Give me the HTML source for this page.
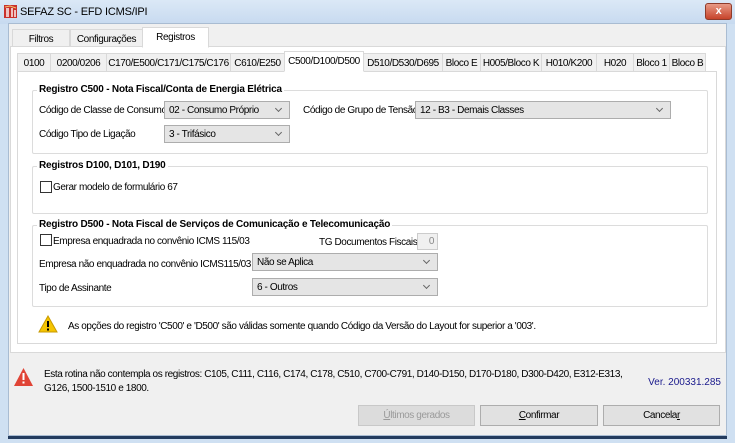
<!DOCTYPE html>
<html><head><meta charset="utf-8"><style>
*{box-sizing:border-box;margin:0;padding:0}
body{width:735px;height:443px;overflow:hidden;background:#cfe0f2;font-family:"Liberation Sans",sans-serif;font-size:10px;letter-spacing:-0.4px;color:#000;position:relative}
.a{position:absolute;white-space:nowrap}
#title{left:0;top:0;width:735px;height:24px;background:linear-gradient(#dbe8f6,#c7daf0)}
#client{left:8px;top:23px;width:719px;height:413px;background:#f0f0f0;border:1px solid #a9bcd2}
.tab{position:absolute;height:18px;border:1px solid #d9d9d9;border-bottom:none;background:#f0f0f0;text-align:center;line-height:19px}
.tab.sel{background:#fff;border-color:#d9d9d9}
.pane{position:absolute;background:#fff;border:1px solid #d9d9d9}
.grp{position:absolute;border:1px solid #dcdcdc;border-radius:2px}
.gt{position:absolute;background:#fff;font-weight:bold;padding:0 2px;top:-8px;left:4px;line-height:14px;letter-spacing:-0.2px}
.cb{position:absolute;height:18px;background:#e5e5e5;border:1px solid #adadad;padding-left:4px;line-height:17px}
.cb:after{content:"";position:absolute;right:8px;top:4px;width:4px;height:4px;border-right:1px solid #666;border-bottom:1px solid #666;transform:rotate(45deg)}
.chk{position:absolute;width:12px;height:12px;border:1px solid #333;background:#fff}
.btn{position:absolute;height:21px;border:1px solid #adadad;background:#e1e1e1;text-align:center;line-height:20px}
</style></head><body>
<div class="a" id="title"></div>
<svg class="a" style="left:4px;top:5px" width="13" height="13" viewBox="0 0 13 13"><rect x="0" y="0" width="13" height="13" fill="#c9302c"/><path d="M2 3h3v9H2zM7 3h2v9H7zM10 5h2v7h-2z" fill="#fff" opacity=".7"/><path d="M1 2l5-1 6 2" stroke="#f5c26b" fill="none"/></svg>
<div class="a" style="left:20px;top:6px;font-size:11px;letter-spacing:-0.2px">SEFAZ SC - EFD ICMS/IPI</div>
<div class="a" style="left:705px;top:3px;width:27px;height:17px;background:linear-gradient(#e89a86,#c7432a);border:1px solid #8e3b2b;border-radius:3px;color:#fff;text-align:center;font-weight:bold;line-height:15px;font-size:11px">x</div>
<div class="a" id="client"></div>
<div class="a" style="left:8px;top:436px;width:719px;height:3px;background:#233b5e"></div>

<div class="tab" style="left:12px;top:29px;width:58px">Filtros</div>
<div class="tab" style="left:70px;top:29px;width:73px">Configurações</div>
<div class="pane" style="left:10px;top:46px;width:716px;height:307px"></div>
<div class="tab sel" style="left:142px;top:27px;width:67px;height:21px;border-bottom:1px solid #fff">Registros</div>

<div class="tab" style="left:17px;top:53px;width:34px">0100</div>
<div class="tab" style="left:50px;top:53px;width:57px">0200/0206</div>
<div class="tab" style="left:106px;top:53px;width:125px">C170/E500/C171/C175/C176</div>
<div class="tab" style="left:230px;top:53px;width:55px">C610/E250</div>
<div class="tab" style="left:363px;top:53px;width:80px">D510/D530/D695</div>
<div class="tab" style="left:442px;top:53px;width:39px">Bloco E</div>
<div class="tab" style="left:480px;top:53px;width:62px">H005/Bloco K</div>
<div class="tab" style="left:541px;top:53px;width:56px">H010/K200</div>
<div class="tab" style="left:596px;top:53px;width:38px">H020</div>
<div class="tab" style="left:633px;top:53px;width:37px">Bloco 1</div>
<div class="tab" style="left:669px;top:53px;width:37px">Bloco B</div>
<div class="pane" style="left:17px;top:71px;width:700px;height:273px"></div>
<div class="tab sel" style="left:284px;top:51px;width:80px;height:21px;background:#fff;border-bottom:1px solid #fff;line-height:19px">C500/D100/D500</div>

<div class="grp" style="left:32px;top:90px;width:676px;height:64px"><div class="gt">Registro C500 - Nota Fiscal/Conta de Energia Elétrica</div></div>
<div class="a" style="left:39px;top:105px">Código de Classe de Consumo</div>
<div class="cb" style="left:164px;top:101px;width:126px">02 - Consumo Próprio</div>
<div class="a" style="left:303px;top:105px">Código de Grupo de Tensão</div>
<div class="cb" style="left:415px;top:101px;width:256px">12 - B3 - Demais Classes</div>
<div class="a" style="left:39px;top:129px">Código Tipo de Ligação</div>
<div class="cb" style="left:164px;top:125px;width:126px">3 - Trifásico</div>

<div class="grp" style="left:32px;top:166px;width:676px;height:48px"><div class="gt">Registros D100, D101, D190</div></div>
<div class="chk" style="left:40px;top:181px"></div>
<div class="a" style="left:53px;top:182px">Gerar modelo de formulário 67</div>

<div class="grp" style="left:32px;top:225px;width:676px;height:82px"><div class="gt">Registro D500 - Nota Fiscal de Serviços de Comunicação e Telecomunicação</div></div>
<div class="chk" style="left:40px;top:234px"></div>
<div class="a" style="left:53px;top:236px">Empresa enquadrada no convênio ICMS 115/03</div>
<div class="a" style="left:319px;top:237px">TG Documentos Fiscais</div>
<div class="a" style="left:417px;top:233px;width:21px;height:17px;border:1px solid #ccc;background:#f0f0f0;text-align:right;padding-right:3px;line-height:15px;color:#888">0</div>
<div class="a" style="left:39px;top:259px">Empresa não enquadrada no convênio ICMS115/03</div>
<div class="cb" style="left:252px;top:253px;width:186px">Não se Aplica</div>
<div class="a" style="left:39px;top:283px">Tipo de Assinante</div>
<div class="cb" style="left:252px;top:278px;width:186px">6 - Outros</div>

<svg class="a" style="left:38px;top:315px" width="20" height="18" viewBox="0 0 20 18"><path d="M10 1L19 17H1z" fill="#f5c400" stroke="#c89a00"/><rect x="9" y="6" width="2" height="6" fill="#000"/><rect x="9" y="13.5" width="2" height="2" fill="#000"/></svg>
<div class="a" style="left:68px;top:321px">As opções do registro 'C500' e 'D500' são válidas somente quando Código da Versão do Layout for superior a '003'.</div>

<svg class="a" style="left:13px;top:367px" width="21" height="20" viewBox="0 0 21 20"><path d="M10.5 1L20 19H1z" fill="#e04436"/><rect x="9.5" y="6" width="2" height="7" fill="#fff"/><rect x="9.5" y="14.5" width="2" height="2" fill="#fff"/></svg>
<div class="a" style="left:44px;top:368px;line-height:14px">Esta rotina não contempla os registros: C105, C111, C116, C174, C178, C510, C700-C791, D140-D150, D170-D180, D300-D420, E312-E313,<br>G126, 1500-1510 e 1800.</div>
<div class="a" style="left:640px;top:377px;width:81px;text-align:right;color:#1a1a8c;letter-spacing:0">Ver. 200331.285</div>

<div class="btn" style="left:358px;top:405px;width:117px;color:#9a9a9a;background:#dcdcdc;border-color:#c8c8c8"><u>Ú</u>ltimos gerados</div>
<div class="btn" style="left:480px;top:405px;width:118px"><u>C</u>onfirmar</div>
<div class="btn" style="left:603px;top:405px;width:117px">Cancela<u>r</u></div>
</body></html>
